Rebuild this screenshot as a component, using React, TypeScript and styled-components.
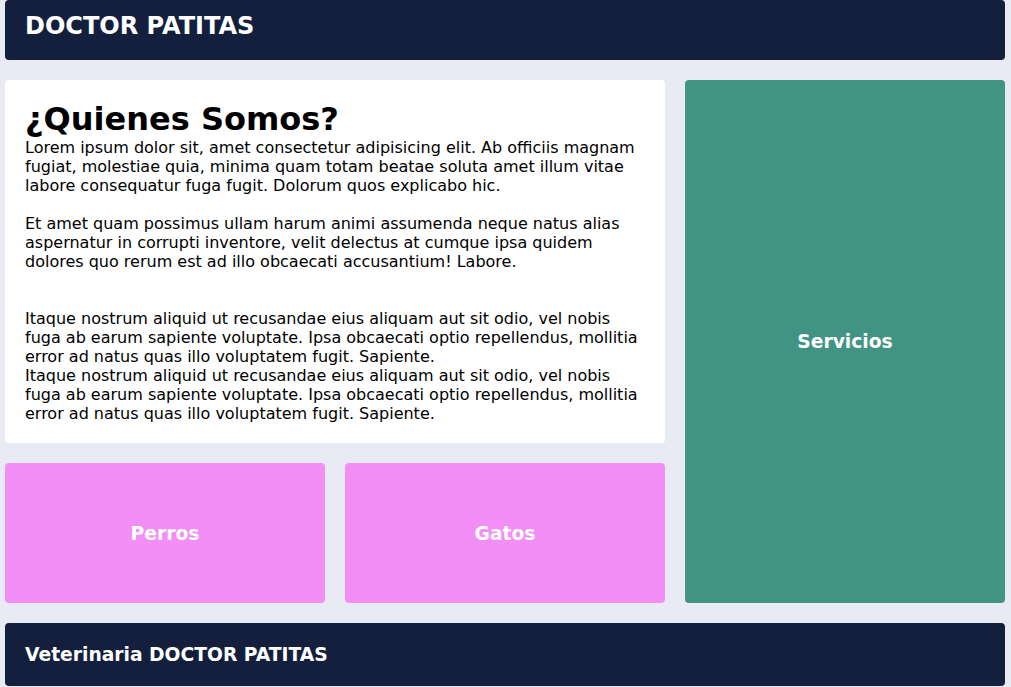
import React from 'react';
import styled, { createGlobalStyle } from 'styled-components';

const GlobalStyle = createGlobalStyle`
  html, body {
    margin: 0;
    padding: 0;
    background: #e8ebf4;
    font-family: 'DejaVu Sans', sans-serif;
  }
`;

const Layout = styled.div`
  display: grid;
  grid-template-columns: repeat(3, 320px);
  grid-template-rows: 60px 363px 140px 63px;
  gap: 20px;
  padding: 0 6px 1px 5px;
`;

const Bar = styled.div<{ $lift?: number }>`
  grid-column: 1 / -1;
  background: #131f3d;
  color: #ffffff;
  border-radius: 4px;
  display: flex;
  align-items: center;
  padding: 0 20px ${(p) => p.$lift ?? 0}px;
`;

const BarTitle = styled.h1<{ $size: number }>`
  margin: 0;
  font-size: ${(p) => p.$size}px;
  font-weight: bold;
`;

const About = styled.section`
  grid-column: 1 / 3;
  background: #ffffff;
  border-radius: 4px;
  padding: 20px;
  font-size: 16px;
  line-height: 19px;
  color: #000000;

  h2 {
    margin: 0;
    font-size: 32px;
    line-height: 38px;
    font-weight: bold;
  }
  p {
    margin: 0;
  }
`;

const Tile = styled.div<{ $color: string; $tall?: boolean }>`
  background: ${(p) => p.$color};
  border-radius: 4px;
  color: #ffffff;
  font-weight: bold;
  font-size: 18.72px;
  display: flex;
  align-items: center;
  justify-content: center;
  grid-column: ${(p) => (p.$tall ? '3' : 'auto')};
  grid-row: ${(p) => (p.$tall ? '2 / 4' : 'auto')};
`;

const lorem1 =
  'Lorem ipsum dolor sit, amet consectetur adipisicing elit. Ab officiis magnam fugiat, molestiae quia, minima quam totam beatae soluta amet illum vitae labore consequatur fuga fugit. Dolorum quos explicabo hic.';
const lorem2 =
  'Et amet quam possimus ullam harum animi assumenda neque natus alias aspernatur in corrupti inventore, velit delectus at cumque ipsa quidem dolores quo rerum est ad illo obcaecati accusantium! Labore.';
const lorem3 =
  'Itaque nostrum aliquid ut recusandae eius aliquam aut sit odio, vel nobis fuga ab earum sapiente voluptate. Ipsa obcaecati optio repellendus, mollitia error ad natus quas illo voluptatem fugit. Sapiente.';

export default function App() {
  return (
    <>
      <GlobalStyle />
      <Layout>
        <Bar $lift={8}>
          <BarTitle $size={24}>DOCTOR PATITAS</BarTitle>
        </Bar>
        <About>
          <h2>¿Quienes Somos?</h2>
          <p>
            {lorem1}
            <br />
            <br />
            {lorem2}
            <br />
            <br />
            <br />
            {lorem3}
            <br />
            {lorem3}
          </p>
        </About>
        <Tile $color="#419383" $tall>
          Servicios
        </Tile>
        <Tile $color="#f28ef5">Perros</Tile>
        <Tile $color="#f28ef5">Gatos</Tile>
        <Bar>
          <BarTitle $size={18.72}>Veterinaria DOCTOR PATITAS</BarTitle>
        </Bar>
      </Layout>
    </>
  );
}
